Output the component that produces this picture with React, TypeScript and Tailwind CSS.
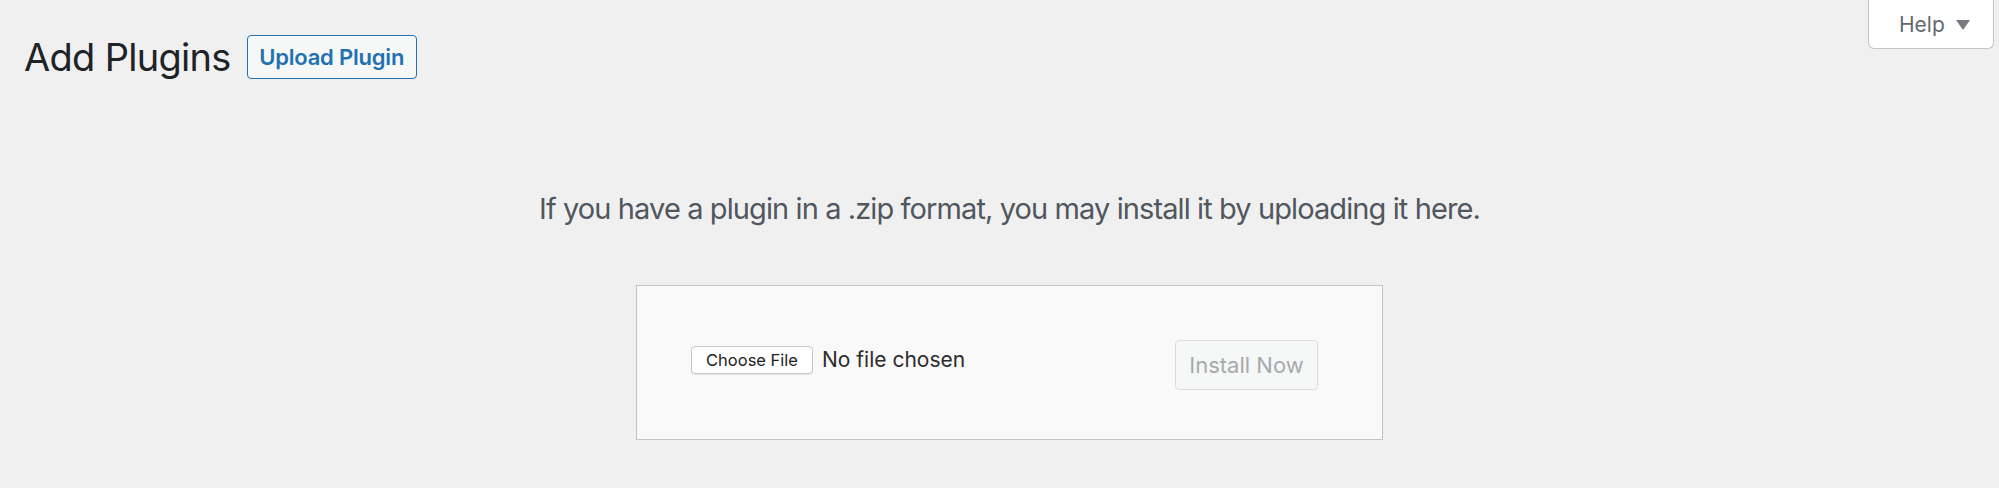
export default function App() {
  return (
    <div className="min-h-[488px] w-full bg-[#f0f0f1] font-['Inter','Liberation_Sans',sans-serif] text-[#3c434a]">
      <div className="flex items-start justify-between">
        <div className="flex items-center pl-[24px] pt-[35px]">
          <h1 className="text-[38px] leading-[44px] font-normal text-[#1d2327] tracking-[-0.7px]">
            Add Plugins
          </h1>
          <button className="ml-[16px] h-[44px] w-[170px] rounded-[4px] border-[1.5px] border-[#2271b1] bg-[#f6f7f7] text-[22px] font-semibold text-[#2271b1] tracking-[-0.2px]">
            Upload Plugin
          </button>
        </div>
        <button className="mr-[5px] flex h-[49px] w-[126px] items-center gap-[11px] rounded-b-[6px] border border-t-0 border-[#c3c4c7] bg-white pl-[30px] pt-[2px] text-[21px] text-[#646970]">
          <span>Help</span>
          <svg width="14" height="11" viewBox="0 0 14 11" className="mt-[1px]">
            <path d="M0 0h14L7 10z" fill="#787c82" />
          </svg>
        </button>
      </div>

      <div className="pl-[20px]">
        <p className="mt-[112px] text-center text-[29px] leading-[36px] tracking-[-0.9px] text-[#50575e]">
          If you have a plugin in a .zip format, you may install it by uploading it here.
        </p>
        <div className="mx-auto mt-[58px] flex h-[155px] w-[747px] items-center border-[1.5px] border-[#c3c4c7] bg-[#f9f9f9] pl-[54px] pr-[64px]">
          <div className="flex items-center -mt-[5px]">
            <span className="flex h-[28px] w-[122px] items-center justify-center rounded-[4px] border border-[#c8c8c8] bg-white text-[16.5px] text-[#222] shadow-[0_1px_1px_rgba(0,0,0,0.08)]">
              Choose File
            </span>
            <span className="ml-[9px] text-[21px] text-[#2c2c2c]">No file chosen</span>
          </div>
          <button className="ml-auto mt-[5px] h-[50px] w-[143px] rounded-[4px] border-[1.5px] border-[#dcdcde] bg-[#f6f7f7] text-[22px] text-[#a7aaad]">
            Install Now
          </button>
        </div>
      </div>
    </div>
  );
}
